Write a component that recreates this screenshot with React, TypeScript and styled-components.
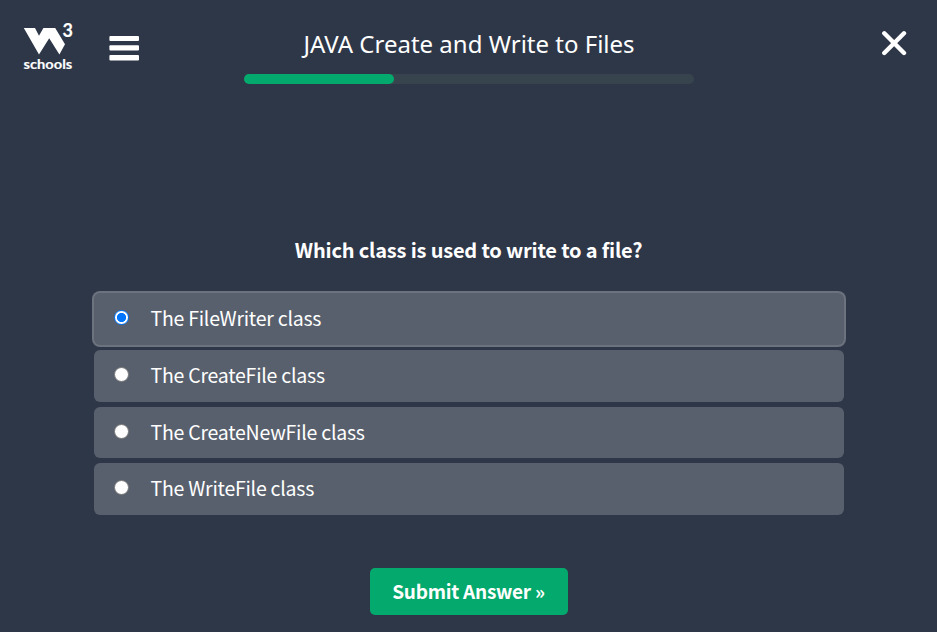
import React, { useState } from "react";
import styled, { createGlobalStyle } from "styled-components";

const GlobalStyle = createGlobalStyle`
  *, *::before, *::after { box-sizing: border-box; }
  body {
    margin: 0;
    background: #2e3748;
    color: #fff;
    font-family: "Noto Sans CJK SC", "Noto Sans", sans-serif;
    overflow: hidden;
  }
`;

const Page = styled.div`
  display: flex;
  flex-direction: column;
  align-items: center;
  width: 937px;
  height: 632px;
`;

const Header = styled.header`
  display: grid;
  grid-template-columns: 244px 450px 1fr;
  width: 100%;
  height: 84px;
`;

const Brand = styled.div`
  display: flex;
  align-items: flex-start;
  padding: 20px 0 0 20px;
  gap: 33px;
`;

const LogoMark = styled.svg`
  display: block;
  width: 56px;
  height: 56px;
  fill: #fff;
`;

const LogoText = styled.text<{ $size: number }>`
  font-family: "Lato", sans-serif;
  font-weight: 700;
  font-size: ${(p) => p.$size}px;
  stroke: #fff;
  stroke-width: 0.15px;
`;

const IconButton = styled.button<{ $top: number }>`
  display: block;
  margin-top: ${(p) => p.$top}px;
  padding: 0;
  border: 0;
  background: none;
  color: #fff;
  line-height: 0;
  cursor: pointer;
`;

const Center = styled.div`
  display: flex;
  flex-direction: column;
  justify-content: flex-end;
`;

const Title = styled.h1`
  margin: 0 0 13px;
  height: 34px;
  font: 400 24px/34px "Noto Sans", sans-serif;
  text-align: center;
  white-space: nowrap;
`;

const Track = styled.div`
  height: 10px;
  border-radius: 5px;
  background: #38444d;
`;

const Fill = styled.div`
  width: 150px;
  height: 10px;
  border-radius: 5px;
  background: #04aa6d;
`;

const CloseArea = styled.div`
  display: flex;
  justify-content: flex-end;
  align-items: flex-start;
  padding-right: 30px;
`;

const Question = styled.h2`
  margin: 149px 0 0;
  height: 34px;
  font-size: 20px;
  font-weight: 700;
  line-height: 34px;
  letter-spacing: -0.18px;
  white-space: nowrap;
`;

const Options = styled.div`
  display: grid;
  grid-template-rows: 52px 52px 51px 52px;
  gap: 5px;
  width: 750px;
  margin: 26px 0 53px;
`;

const Option = styled.label<{ $active: boolean }>`
  display: flex;
  align-items: center;
  padding-left: 20px;
  gap: 22px;
  border-radius: 6px;
  background: #58606d;
  box-shadow: ${(p) => (p.$active ? "0 0 0 2px #6c737e" : "none")};
  cursor: pointer;
`;

const Radio = styled.input`
  width: 15px;
  height: 15px;
  margin: 0 0 3px;
  appearance: none;
  border: 1px solid #767676;
  border-radius: 50%;
  background: #fff;
  flex: none;
  outline: none;

  &:checked {
    border: 1.5px solid #0075ff;
    background: radial-gradient(circle, #0075ff 0 4.2px, #fff 5px);
  }
`;

const OptionText = styled.span`
  margin-bottom: 2px;
  font-size: 19.5px;
  line-height: 30px;
  letter-spacing: -0.24px;
  white-space: nowrap;
`;

const Submit = styled.button`
  width: 198px;
  height: 47px;
  padding: 0 0 2px;
  border: 0;
  border-radius: 5px;
  background: #04aa6d;
  color: #fff;
  font: 700 19px/45px "Noto Sans CJK SC", "Noto Sans", sans-serif;
  letter-spacing: -0.25px;
  white-space: nowrap;
  cursor: pointer;
`;

const answers = [
  "The FileWriter class",
  "The CreateFile class",
  "The CreateNewFile class",
  "The WriteFile class",
];

function Logo() {
  return (
    <LogoMark viewBox="0 0 56 56">
      <path d="M3.8 8H15L19 15.8L23.4 8H35.2L45 24.2L39.4 34.4L29.2 18.3L19 34.4Z" />
      <LogoText $size={18} x="42.4" y="17">3</LogoText>
      <LogoText $size={13} x="3.5" y="49" textLength="48.8" lengthAdjust="spacingAndGlyphs">
        schools
      </LogoText>
    </LogoMark>
  );
}

export default function App() {
  const [selected, setSelected] = useState(0);
  return (
    <>
      <GlobalStyle />
      <Page>
        <Header>
          <Brand>
            <Logo />
            <IconButton $top={15} aria-label="Menu">
              <svg width="30" height="26" fill="currentColor">
                <rect x="0.4" y="1" width="29.6" height="5" rx="1" />
                <rect x="0.4" y="10.3" width="29.6" height="5.2" rx="1" />
                <rect x="0.4" y="20" width="29.6" height="5.4" rx="1" />
              </svg>
            </IconButton>
          </Brand>
          <Center>
            <Title>JAVA Create and Write to Files</Title>
            <Track>
              <Fill />
            </Track>
          </Center>
          <CloseArea>
            <IconButton $top={30} aria-label="Close">
              <svg width="26" height="26" stroke="currentColor" strokeWidth="4.4">
                <path d="M3.3 3.3L23 23M23 3.3L3.3 23" strokeLinecap="round" />
              </svg>
            </IconButton>
          </CloseArea>
        </Header>
        <Question>Which class is used to write to a file?</Question>
        <Options>
          {answers.map((answer, i) => (
            <Option key={answer} $active={selected === i}>
              <Radio
                type="radio"
                name="answer"
                checked={selected === i}
                onChange={() => setSelected(i)}
              />
              <OptionText>{answer}</OptionText>
            </Option>
          ))}
        </Options>
        <Submit>Submit Answer »</Submit>
      </Page>
    </>
  );
}
